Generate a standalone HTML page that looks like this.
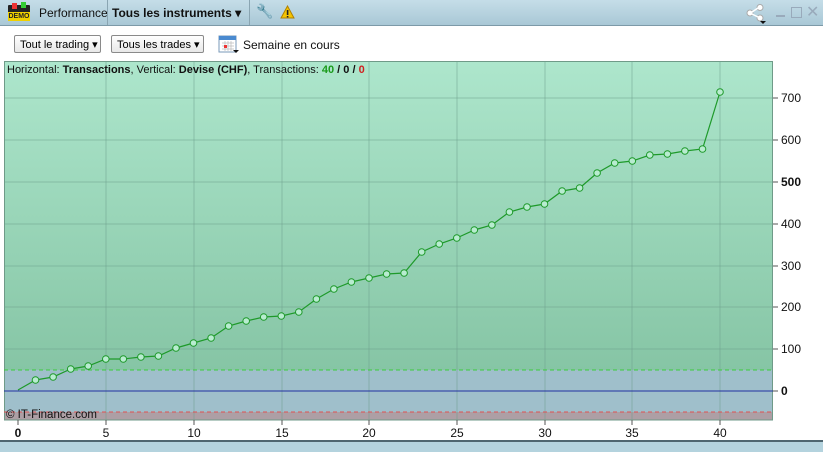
<!DOCTYPE html><html><head><style>
body{margin:0;width:823px;height:450px;overflow:hidden;background:#fff;font-family:"Liberation Sans",sans-serif;font-size:12px;position:relative}
.top{position:absolute;left:0;top:0;width:823px;height:25px;background:linear-gradient(#c5dde8,#a9c8d6);border-bottom:1px solid #7d9aa8}
.sep{position:absolute;top:0;width:1px;height:25px;background:#8aa5b2}
.btn{position:absolute;top:35px;height:18px;border:1px solid #8a8a8a;border-radius:2px;background:linear-gradient(#fff,#e8e8e8);font-size:11px;line-height:18px;padding:0 0 0 5px;box-sizing:border-box;white-space:nowrap;overflow:hidden}
.bot{position:absolute;left:0;top:440px;width:823px;height:10px;background:#b4d3de;border-top:2px solid #4f6670}
</style></head><body>
<div class="top">
 <div style="position:absolute;left:8px;top:5px;width:22px;height:16px;background:#222;border-radius:1px"></div>
 <div style="position:absolute;left:12px;top:3px;width:5px;height:6px;background:#e33"></div>
 <div style="position:absolute;left:21px;top:2px;width:5px;height:6px;background:#3c3"></div>
 <div style="position:absolute;left:8px;top:12px;width:22px;height:9px;background:#f0d000;color:#222;font-size:7px;font-weight:bold;line-height:9px;text-align:center">DEMO</div>
 <div style="position:absolute;left:39px;top:6px;font-size:12px;color:#111">Performance</div>
 <div class="sep" style="left:107px"></div>
 <div style="position:absolute;left:112px;top:6px;font-size:12px;font-weight:bold;color:#111">Tous les instruments &#9662;</div>
 <div class="sep" style="left:249px"></div>
 <div style="position:absolute;left:256px;top:3px;font-size:14px">&#128295;</div>
 <svg style="position:absolute;left:280px;top:5px" width="15" height="14"><polygon points="7.5,1 14,13 1,13" fill="#f5c400" stroke="#b08000"/><rect x="6.8" y="5" width="1.6" height="5" fill="#222"/><rect x="6.8" y="11" width="1.6" height="1.4" fill="#222"/></svg>
 <svg style="position:absolute;left:746px;top:4px" width="22" height="20"><circle cx="14" cy="3.5" r="3" fill="#fff" stroke="#aaa"/><circle cx="4" cy="9" r="3" fill="#fff" stroke="#aaa"/><circle cx="14" cy="14" r="3" fill="#fff" stroke="#aaa"/><path d="M6 8L12 4M6 10L12 13" stroke="#fff" stroke-width="1.5"/><path d="M14 17h6l-3 3z" fill="#111"/></svg>
 <div style="position:absolute;left:776px;top:15px;width:9px;height:2px;background:#9ab"></div>
 <div style="position:absolute;left:791px;top:7px;width:9px;height:9px;border:1px solid #9ab"></div>
 <div style="position:absolute;left:806px;top:2px;color:#9ab;font-size:16px">&#10005;</div>
</div>
<div class="btn" style="left:14px;width:87px">Tout le trading &#9662;</div>
<div class="btn" style="left:111px;width:93px">Tous les trades &#9662;</div>
<svg style="position:absolute;left:218px;top:34px" width="22" height="20"><rect x="1" y="2" width="17" height="16" fill="#fff" stroke="#7a9ab8"/><rect x="1" y="2" width="17" height="4" fill="#4a8ad0"/><path d="M4 9h12M4 12h12M4 15h12M7 7v10M10 7v10M13 7v10" stroke="#bbb" stroke-width=".7"/><rect x="6" y="11" width="3" height="3" fill="#e33"/><path d="M15 16h6l-3 3z" fill="#111"/></svg>
<div style="position:absolute;left:243px;top:38px;color:#111">Semaine en cours</div>
<svg style="position:absolute;left:0;top:0" width="823" height="440">
<defs><linearGradient id="g" x1="0" y1="61" x2="0" y2="370" gradientUnits="userSpaceOnUse"><stop offset="0" stop-color="#ade6cc"/><stop offset="1" stop-color="#86c5a5"/></linearGradient></defs>
<rect x="4" y="61" width="769" height="309" fill="url(#g)"/>
<rect x="4" y="370" width="769" height="42" fill="#9fbfcb"/>
<rect x="4" y="412" width="769" height="8" fill="#ad9fa5"/>
<rect x="4.5" y="61.5" width="768" height="358.5" fill="none" stroke="#6f9a88"/>
<g stroke="#6c9e8c" stroke-opacity=".5" stroke-width="1">
<path d="M106 61V420M194 61V420M282 61V420M369 61V420M457 61V420M545 61V420M632 61V420M720 61V420"/>
<path d="M4 98H773M4 140H773M4 182H773M4 224H773M4 266H773M4 307H773M4 349H773"/>
</g>
<path d="M4 370H773" stroke="#3ccc3c" stroke-dasharray="4,3"/>
<path d="M4 412H773" stroke="#e05050" stroke-dasharray="4,3"/>
<path d="M4 391H773" stroke="#2030a0"/>
<g stroke="#555"><path d="M773 98h5M773 140h5M773 182h5M773 224h5M773 266h5M773 307h5M773 349h5M773 391h5M18 420v5M106 420v5M194 420v5M282 420v5M369 420v5M457 420v5M545 420v5M632 420v5M720 420v5"/></g>
<g font-size="12" fill="#111"><text x="781" y="102">700</text><text x="781" y="144">600</text><text x="781" y="186" font-weight="bold">500</text><text x="781" y="228">400</text><text x="781" y="270">300</text><text x="781" y="311">200</text><text x="781" y="353">100</text><text x="781" y="395" font-weight="bold">0</text></g>
<g font-size="12" fill="#111" text-anchor="middle"><text x="18" y="437" font-weight="bold">0</text><text x="106" y="437">5</text><text x="194" y="437">10</text><text x="282" y="437">15</text><text x="369" y="437">20</text><text x="457" y="437">25</text><text x="545" y="437">30</text><text x="632" y="437">35</text><text x="720" y="437">40</text></g>
<text x="6" y="418" font-size="11.5" fill="#111">© IT-Finance.com</text>
<text x="7" y="73" font-size="11" fill="#111">Horizontal: <tspan font-weight="bold">Transactions</tspan>, Vertical: <tspan font-weight="bold">Devise (CHF)</tspan>, Transactions: <tspan font-weight="bold" fill="#1a9a1a">40</tspan> <tspan font-weight="bold">/ 0 /</tspan> <tspan font-weight="bold" fill="#d02020">0</tspan></text>
<g id="ch"></g>
</svg>
<div class="bot"></div>
<script>
var ys=[390,380,377,369,366,359,359,357,356,348,343,338,326,321,317,316,312,299,289,282,278,274,273,252,244,238,230,225,212,207,204,191,188,173,163,161,155,154,151,149,92];
var s='<polyline fill="none" stroke="#1e9a2a" stroke-width="1.2" points="'+ys.map(function(y,i){return (18+17.55*i).toFixed(1)+','+y}).join(' ')+'"/>';
for(var i=1;i<ys.length;i++)s+='<circle cx="'+(18+17.55*i).toFixed(1)+'" cy="'+ys[i]+'" r="3.3" fill="#b8ecd0" stroke="#1e9a2a"/>';
document.getElementById('ch').innerHTML=s;
</script>
</body></html>
